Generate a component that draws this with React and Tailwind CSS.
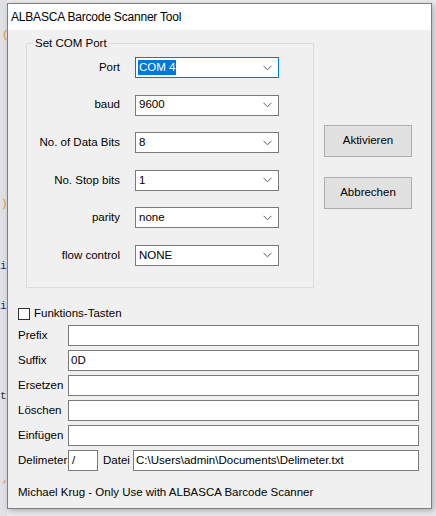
import React from "react";

const Chevron = () => (
  <svg width="9" height="6" viewBox="0 0 9 6" className="shrink-0">
    <path d="M0.5 0.8 L4.5 4.8 L8.5 0.8" fill="none" stroke="#5a5a5a" strokeWidth="1" />
  </svg>
);

const Combo = ({ value, focused }) => (
  <div
    className={`w-[144px] h-[21px] bg-white border flex items-center pl-[2px] pr-[6px] ${
      focused ? "border-[#0078d7]" : "border-[#7a7a7a]"
    }`}
  >
    <div className="flex-1 flex items-center">
      {focused ? (
        <span className="bg-[#0078d7] text-white px-[1px] leading-[15px]">{value}</span>
      ) : (
        <span className="pl-[1px]">{value}</span>
      )}
    </div>
    <Chevron />
  </div>
);

const ComRow = ({ label, value, focused }) => (
  <div className="flex items-center h-[21px]">
    <div className="w-[93px] text-right">{label}</div>
    <div className="ml-[15px]">
      <Combo value={value} focused={focused} />
    </div>
  </div>
);

const TextRow = ({ label, value }) => (
  <div className="flex items-center h-[21px]">
    <div className="w-[50px]">{label}</div>
    <div className="flex-1 h-[21px] bg-white border border-[#7a7a7a] flex items-center pl-[2px]">
      {value}
    </div>
  </div>
);

const WinButton = ({ children }) => (
  <div className="w-[88px] h-[32px] bg-[#e1e1e1] border border-[#adadad] flex items-center justify-center">
    {children}
  </div>
);

export default function App() {
  const comRows = [
    { label: "Port", value: "COM 4", focused: true },
    { label: "baud", value: "9600" },
    { label: "No. of Data Bits", value: "8" },
    { label: "No. Stop bits", value: "1" },
    { label: "parity", value: "none" },
    { label: "flow control", value: "NONE" },
  ];

  return (
    <div
      className="w-[436px] h-[516px] bg-[#e9eaec] flex relative overflow-hidden text-[11.5px] text-black"
      style={{ fontFamily: '"Liberation Sans", Arial, sans-serif' }}
    >
      {/* editor behind the dialog */}
      <div className="absolute left-0 top-0 w-[7px] h-full bg-[#dfe1e5] font-mono text-[11px] leading-none">
        <span className="absolute left-[2px] top-[30px] text-[#e8912d]">(</span>
        <span className="absolute left-[1px] top-[199px] text-[#e8912d]">)</span>
        <span className="absolute left-[0px] top-[261px] text-[#1a1aa6]">i</span>
        <span className="absolute left-[0px] top-[301px] text-[#1a1aa6]">i</span>
        <span className="absolute left-[0px] top-[391px] text-[#333]">t</span>
        <span className="absolute left-[2px] top-[474px] text-[#e8912d]">,</span>
      </div>

      <div className="relative ml-[7px] mt-[3px] w-[425px] h-[506px] border border-[#7f7f7f] bg-[#f0f0f0] flex flex-col shadow-[2px_2px_6px_rgba(0,0,0,0.25)]">
        {/* title bar */}
        <div className="h-[26px] bg-white flex items-center pl-[3px] text-[12px] tracking-[-0.2px]">
          ALBASCA Barcode Scanner Tool
        </div>

        <div className="flex flex-col pl-[10px] pr-[12px]">
          {/* top area */}
          <div className="flex mt-[13px]">
            <div className="relative ml-[8px] w-[288px] h-[245px] border border-[#dcdcdc] flex flex-col pt-[13px] gap-[16.6px]">
              <span className="absolute left-[6px] top-[-8px] bg-[#f0f0f0] px-[2px] leading-[14px]">
                Set COM Port
              </span>
              {comRows.map((r) => (
                <ComRow key={r.label} {...r} />
              ))}
            </div>
            <div className="ml-[10px] mt-[82px] flex flex-col gap-[20px]">
              <WinButton>Aktivieren</WinButton>
              <WinButton>Abbrechen</WinButton>
            </div>
          </div>

          {/* options */}
          <div className="flex items-center mt-[20px] h-[12px]">
            <div className="w-[12px] h-[12px] bg-white border border-[#333]" />
            <span className="ml-[4px]">Funktions-Tasten</span>
          </div>

          <div className="flex flex-col gap-[4px] mt-[5px]">
            <TextRow label="Prefix" value="" />
            <TextRow label="Suffix" value="0D" />
            <TextRow label="Ersetzen" value="" />
            <TextRow label="Löschen" value="" />
            <TextRow label="Einfügen" value="" />
            <div className="flex items-center h-[21px]">
              <div className="w-[50px]">Delimeter</div>
              <div className="w-[30px] h-[21px] bg-white border border-[#7a7a7a] flex items-center pl-[3px]">/</div>
              <div className="w-[35px] pl-[5px]">Datei</div>
              <div className="flex-1 h-[21px] bg-white border border-[#7a7a7a] flex items-center pl-[2px]">
                C:\Users\admin\Documents\Delimeter.txt
              </div>
            </div>
          </div>

          <div className="mt-[13px]">Michael Krug - Only Use with ALBASCA Barcode Scanner</div>
        </div>
      </div>
    </div>
  );
}
